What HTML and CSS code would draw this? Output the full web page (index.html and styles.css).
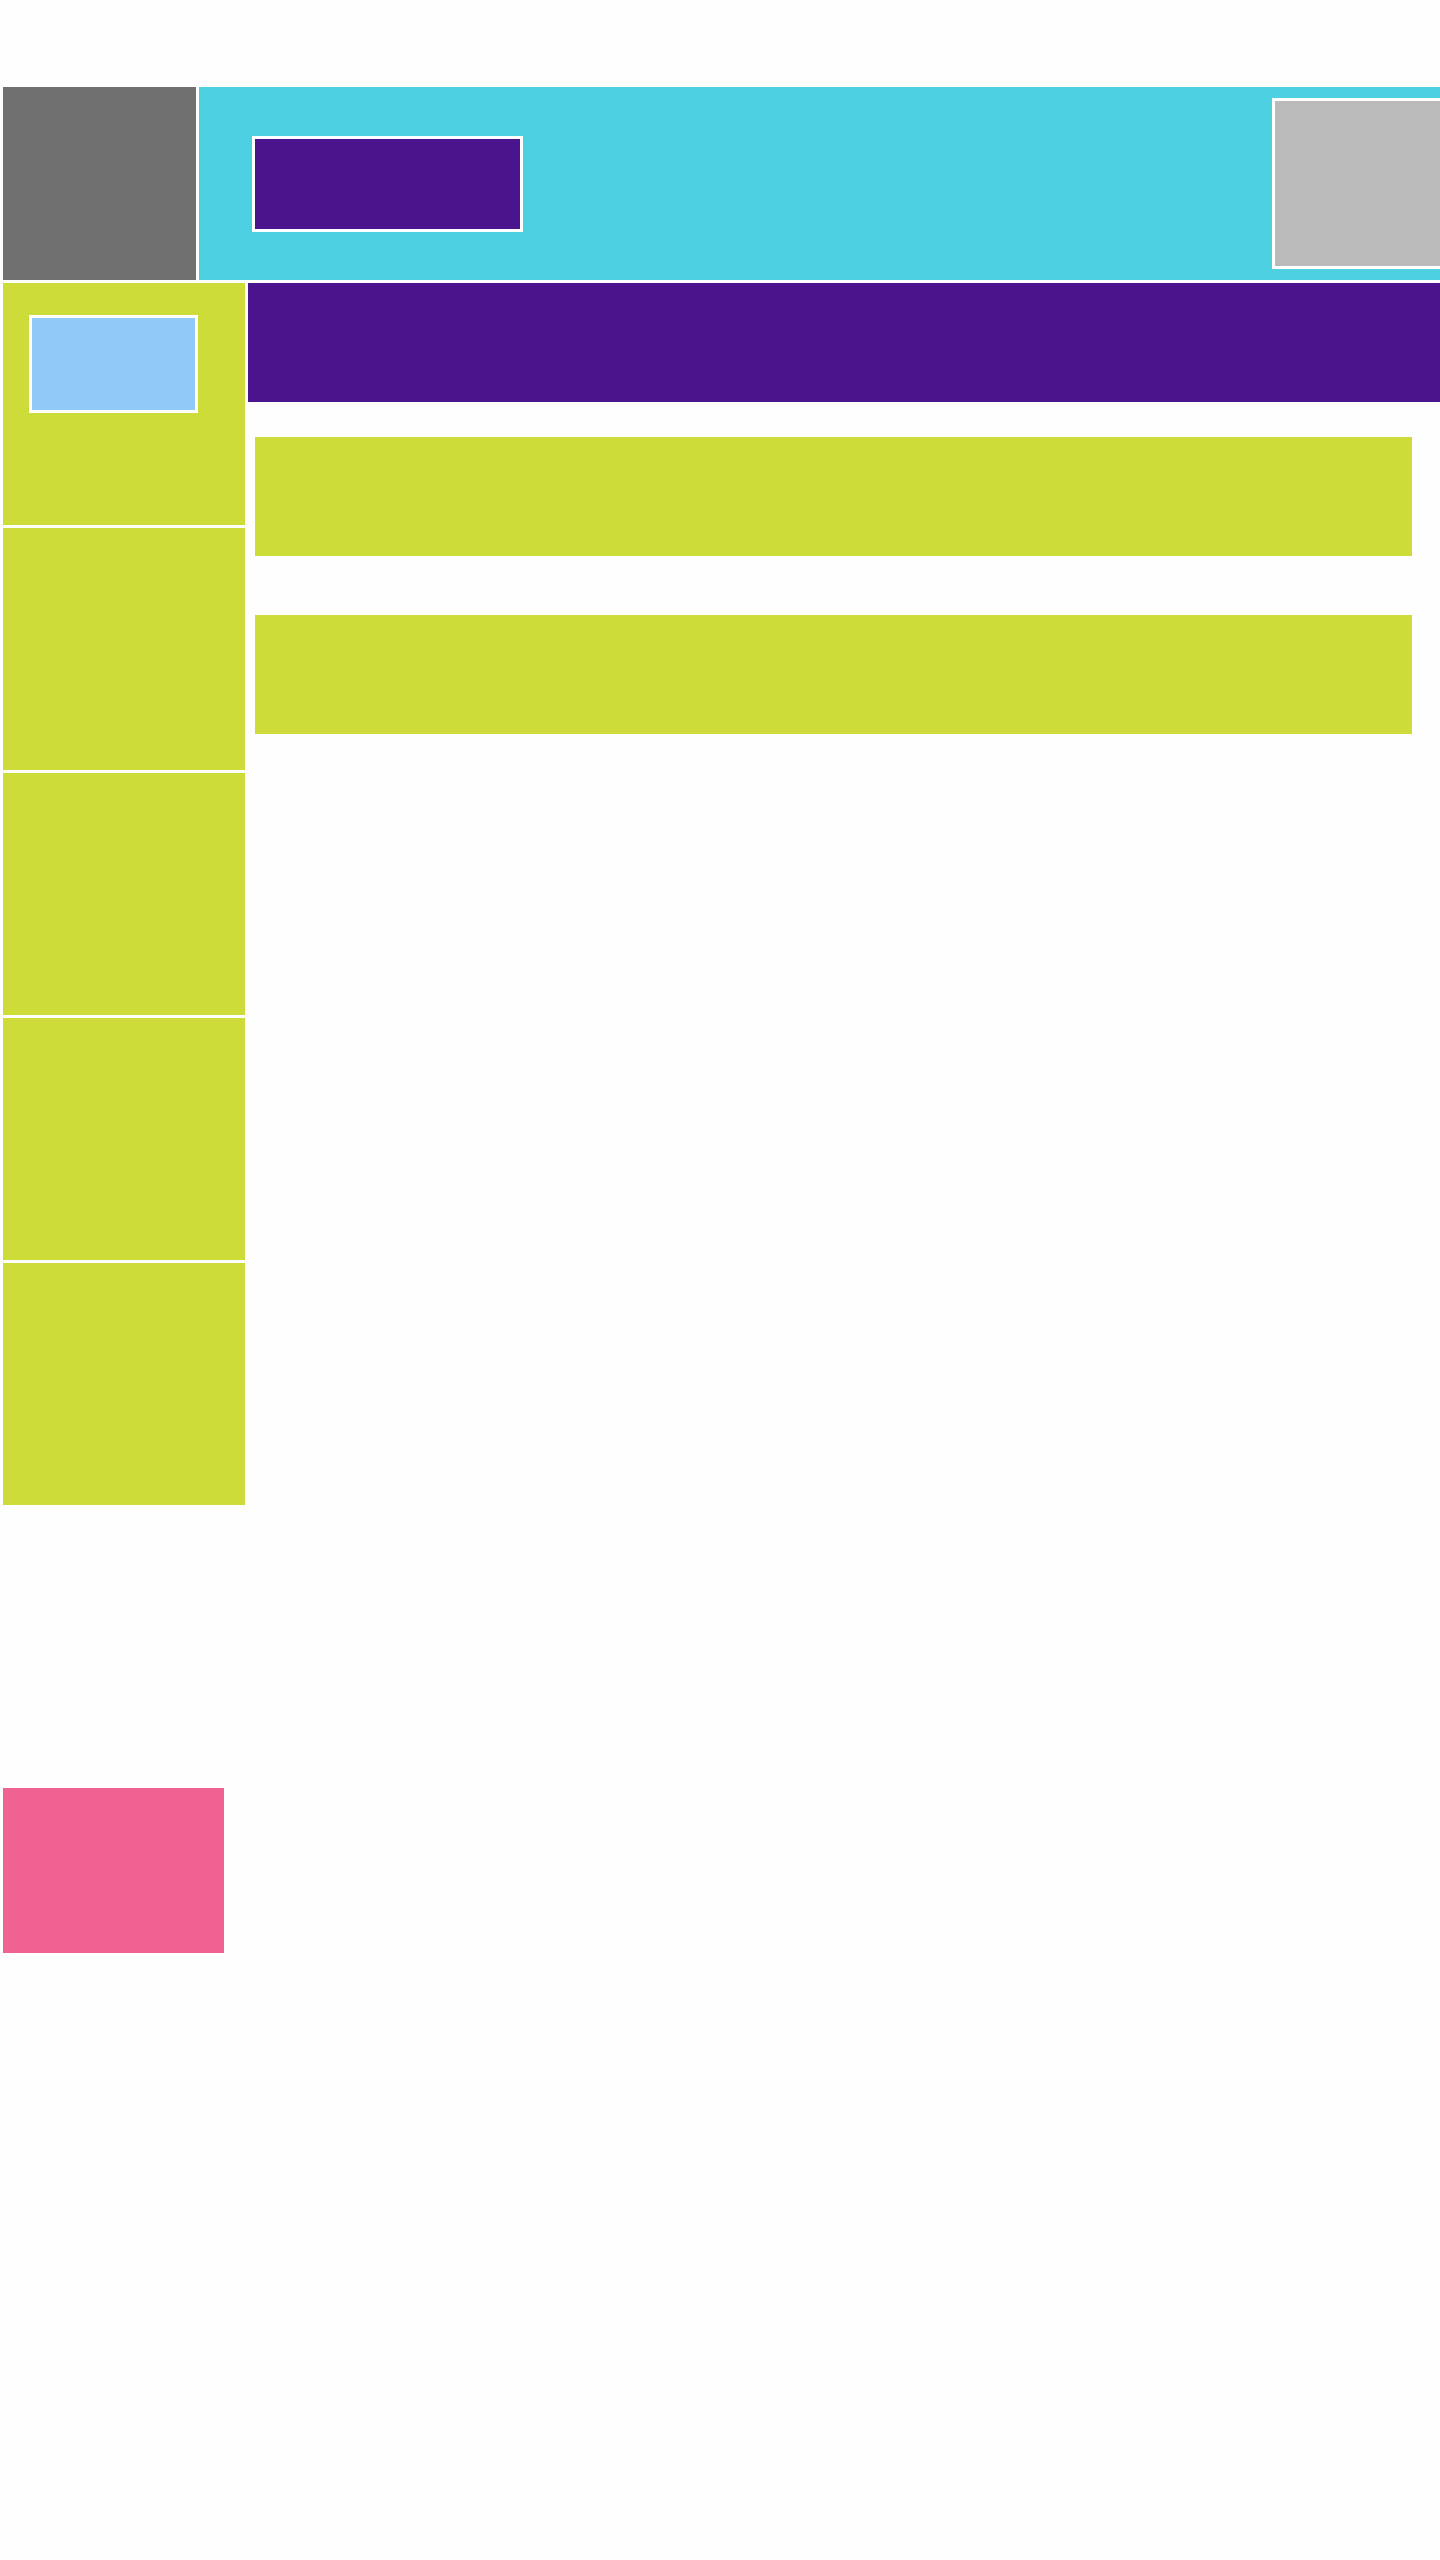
FILE: index.html
```html
<!DOCTYPE html>
<html lang="en">

<head>
    <meta charset="UTF-8">
    <meta name="viewport" content="width=device-width, initial-scale=1.0">
    <title>Layout</title>
    <link rel="stylesheet" href="styles.css">
</head>

<body>
    <div class="page">
        <!-- top bar -->
        <header class="topBar">
            <div class="logoBlock"></div>
            <div class="headerBand">
                <div class="headerButton"></div>
                <div class="avatarBlock"></div>
            </div>
        </header>

        <div class="layout">
            <!-- left column tiles -->
            <nav class="sideNav">
                <div class="navTile">
                    <div class="navBadge"></div>
                </div>
                <div class="navTile"></div>
                <div class="navTile"></div>
                <div class="navTile"></div>
                <div class="navTile"></div>
            </nav>

            <main class="mainArea">
                <div class="titleBar"></div>
                <div class="cardList">
                    <div class="card"></div>
                    <div class="card"></div>
                </div>
            </main>
        </div>

        <div class="footerBlock"></div>
    </div>
</body>

</html>
```

FILE: styles.css
```css
body {
    margin: 0;
    background-color: #fefefe;
    overflow-x: hidden;
}

.page {
    padding: 87px 0 0 3px;
    min-height: 2473px;
}

/* Header */
.topBar {
    display: flex;
    gap: 3px;
    height: 193px;
}

.logoBlock {
    width: 193px;
    flex-shrink: 0;
    background-color: #707070;
}

.headerBand {
    flex: 1;
    display: flex;
    align-items: center;
    justify-content: space-between;
    padding: 0 0 0 53px;
    background-color: #4dd0e1;
    overflow: hidden;
}

.headerButton {
    width: 271px;
    height: 96px;
    box-sizing: border-box;
    border: 3px solid #fff;
    background-color: #4a148c;
}

.avatarBlock {
    width: 171px;
    height: 171px;
    flex-shrink: 0;
    margin-right: -3px;
    box-sizing: border-box;
    border: 3px solid #fff;
    background-color: #bababa;
}

/* Body columns */
.layout {
    display: flex;
    gap: 3px;
    margin-top: 3px;
}

.sideNav {
    display: flex;
    flex-direction: column;
    gap: 3px;
    width: 242px;
    flex-shrink: 0;
}

.navTile {
    height: 242px;
    background-color: #cddc39;
    padding: 32px 0 0 26px;
    box-sizing: border-box;
}

.navBadge {
    width: 169px;
    height: 98px;
    box-sizing: border-box;
    border: 3px solid #fff;
    background-color: #90caf9;
}

.mainArea {
    flex: 1;
}

.titleBar {
    height: 119px;
    background-color: #4a148c;
}

.cardList {
    display: flex;
    flex-direction: column;
    gap: 59px;
    margin: 35px 28px 0 7px;
}

.card {
    height: 119px;
    background-color: #cddc39;
}

/* Bottom block */
.footerBlock {
    width: 221px;
    height: 165px;
    margin-top: 283px;
    background-color: #f06292;
}
```
